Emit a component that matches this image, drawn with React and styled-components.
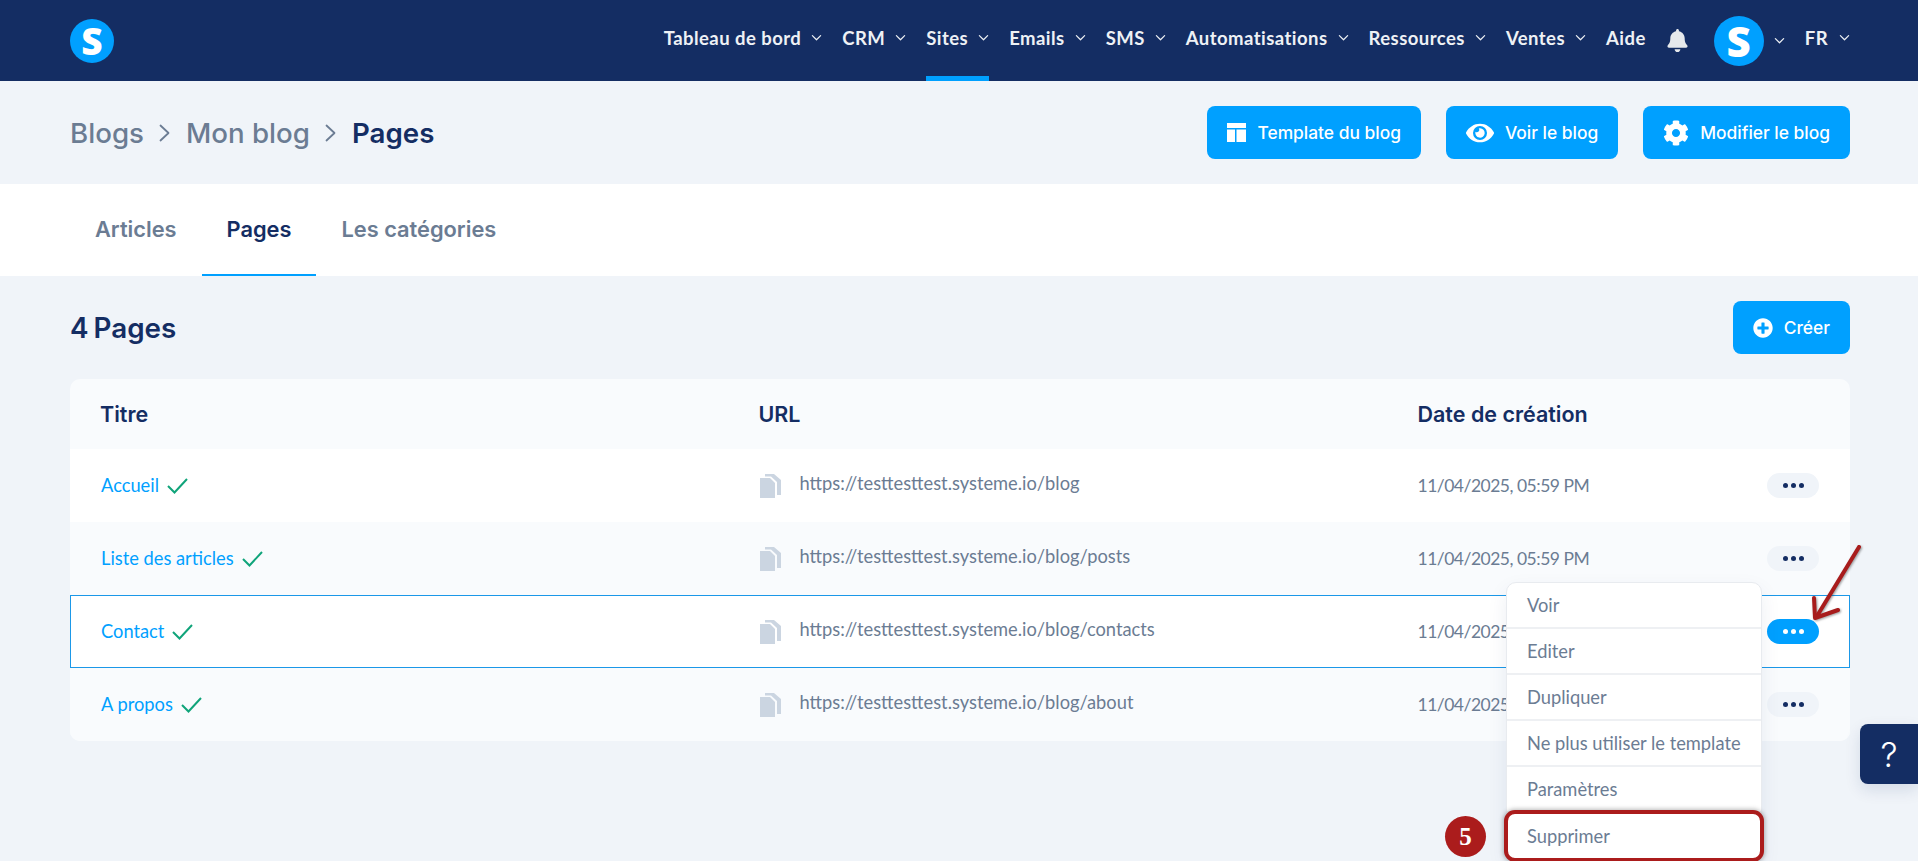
import React from 'react';
import styled, { createGlobalStyle } from 'styled-components';
import { FaBell, FaCog, FaEye, FaPlusCircle } from 'react-icons/fa';

const navItems = [
  { label: 'Tableau de bord', arrow: true },
  { label: 'CRM', arrow: true },
  { label: 'Sites', arrow: true, active: true },
  { label: 'Emails', arrow: true },
  { label: 'SMS', arrow: true },
  { label: 'Automatisations', arrow: true },
  { label: 'Ressources', arrow: true },
  { label: 'Ventes', arrow: true },
  { label: 'Aide' },
];

const pages = [
  { title: 'Accueil', url: 'https://testtesttest.systeme.io/blog' },
  { title: 'Liste des articles', url: 'https://testtesttest.systeme.io/blog/posts', alt: true },
  { title: 'Contact', url: 'https://testtesttest.systeme.io/blog/contacts', selected: true },
  { title: 'A propos', url: 'https://testtesttest.systeme.io/blog/about', alt: true },
];

const menuItems = ['Voir', 'Editer', 'Dupliquer', 'Ne plus utiliser le template', 'Paramètres'];

const Chevron = ({ size = 11 }) => (
  <svg width={size} height={size} viewBox="0 0 12 12" fill="none" stroke="currentColor" strokeWidth="1.3" strokeLinecap="round" strokeLinejoin="round">
    <path d="M1.5 4l4.5 4.5L10.5 4" />
  </svg>
);

const CrumbChevron = () => (
  <svg width="11" height="18" viewBox="0 0 11 18" fill="none" stroke="currentColor" strokeWidth="1.8" strokeLinecap="round" strokeLinejoin="round">
    <path d="M1.5 1.5L9.500 9l-8 7.500" />
  </svg>
);

const TemplateIcon = () => (
  <svg width="19" height="19" viewBox="0 0 19 19" fill="currentColor">
    <path d="M0 0h19v5H0z" />
    <path d="M0 6.500h8V19H0z" />
    <path d="M9.500 6.500H19V19H9.500z" />
  </svg>
);

const CopyIcon = () => (
  <svg width="21" height="24" viewBox="0 0 21 24" fill="#cbd5e1">
    <path d="M0 4h10l5 5v15H0z" />
    <path d="M5 0h9l7 6v15h-4V8l-6-5.500H5z" />
  </svg>
);

const CheckIcon = () => (
  <svg width="21" height="16" viewBox="0 0 21 16" fill="none" stroke="#10a47a" strokeWidth="2">
    <path d="M1 8l6.500 6.500L20 1" />
  </svg>
);

const App = () => (
  <Page>
    <GlobalStyle />
    <TopBar>
      <LogoCircle $size={44}>S</LogoCircle>
      <TopNav>
        {navItems.map((item) => (
          <NavItem key={item.label} $active={item.active}>
            {item.label}
            {item.arrow && <Chevron />}
          </NavItem>
        ))}
        <BellWrap><FaBell size={23} /></BellWrap>
        <AvatarWrap>
          <LogoCircle $size={50}>S</LogoCircle>
          <Chevron />
        </AvatarWrap>
        <LangItem>FR <Chevron /></LangItem>
      </TopNav>
    </TopBar>

    <SubHeader>
      <Breadcrumb>
        <Crumb>Blogs</Crumb>
        <CrumbSep><CrumbChevron /></CrumbSep>
        <Crumb>Mon blog</Crumb>
        <CrumbSep><CrumbChevron /></CrumbSep>
        <Crumb $current>Pages</Crumb>
      </Breadcrumb>
      <Actions>
        <PrimaryButton><TemplateIcon />Template du blog</PrimaryButton>
        <PrimaryButton><FaEye size={28} />Voir le blog</PrimaryButton>
        <PrimaryButton><FaCog size={26} />Modifier le blog</PrimaryButton>
      </Actions>
    </SubHeader>

    <Tabs>
      <Tab>Articles</Tab>
      <Tab $active>Pages</Tab>
      <Tab>Les catégories</Tab>
    </Tabs>

    <Content>
      <TitleRow>
        <PageCount>4 Pages</PageCount>
        <PrimaryButton><FaPlusCircle size={20} />Créer</PrimaryButton>
      </TitleRow>

      <Table>
        <HeadRow>
          <HeadCell>Titre</HeadCell>
          <HeadCell>URL</HeadCell>
          <HeadCell>Date de création</HeadCell>
        </HeadRow>
        {pages.map((page) => (
          <Row key={page.title} $alt={page.alt} $selected={page.selected}>
            <TitleCell><TitleText>{page.title}</TitleText><CheckIcon /></TitleCell>
            <UrlCell><CopyIcon /><UrlText>{page.url}</UrlText></UrlCell>
            <DateCell>11/04/2025, 05:59 PM</DateCell>
            <MoreCell>
              <MoreButton $active={page.selected}>
                <Dot /><Dot /><Dot />
              </MoreButton>
              {page.selected && (
                <Menu>
                  {menuItems.map((label) => <MenuItem key={label}>{label}</MenuItem>)}
                  <MenuItem $marked>
                    Supprimer
                    <StepBadge>5</StepBadge>
                  </MenuItem>
                </Menu>
              )}
            </MoreCell>
          </Row>
        ))}
      </Table>
    </Content>

    <HelpButton>?</HelpButton>

    <ArrowMark width="52" height="82" viewBox="0 0 52 82" fill="none" stroke="#a81c1c" strokeWidth="4" strokeLinecap="round" strokeLinejoin="round">
      <path d="M48 3L6 72" />
      <path d="M3 54L4 74L27 66" />
    </ArrowMark>
  </Page>
);

const GlobalStyle = createGlobalStyle`
  html, body {
    margin: 0;
    padding: 0;
    background: #f0f4f9;
  }
  * {
    box-sizing: border-box;
  }
`;

const Page = styled.div`
  position: relative;
  width: 1918px;
  height: 861px;
  overflow: hidden;
  background: #f0f4f9;
  font-family: Inter, "Liberation Sans", sans-serif;
`;

const TopBar = styled.header`
  display: flex;
  align-items: center;
  justify-content: space-between;
  height: 81px;
  padding: 0 68px 0 70px;
  background: #142d63;
`;

const LogoCircle = styled.div`
  display: flex;
  align-items: center;
  justify-content: center;
  width: ${({ $size }) => $size}px;
  height: ${({ $size }) => $size}px;
  border-radius: 50%;
  background: #00a0ff;
  color: #fff;
  font-family: "Open Sans", sans-serif;
  font-size: ${({ $size }) => Math.round($size * 0.84)}px;
  font-weight: 800;
  line-height: 1;
`;

const TopNav = styled.nav`
  display: flex;
  align-items: center;
  height: 100%;
  color: #eef1f5;
`;

const NavItem = styled.div`
  position: relative;
  display: flex;
  align-items: center;
  gap: 10px;
  height: 100%;
  margin-right: 20px;
  padding-bottom: 6px;
  font-family: Lato, sans-serif;
  font-size: 18.500px;
  font-weight: 700;
  letter-spacing: 0.45px;
  white-space: nowrap;

  ${({ $active }) => $active && `
    &::after {
      content: '';
      position: absolute;
      left: 0;
      right: 0;
      bottom: 0;
      height: 5px;
      background: #00a0ff;
    }
  `}
`;

const BellWrap = styled.div`
  display: flex;
  margin-right: 25px;
  color: #e6e9ec;
`;

const AvatarWrap = styled.div`
  display: flex;
  align-items: center;
  gap: 10px;
  margin-right: 20px;
`;

const LangItem = styled.div`
  display: flex;
  align-items: center;
  gap: 11px;
  margin-bottom: 6px;
  font-family: Lato, sans-serif;
  font-size: 18.500px;
  font-weight: 700;
  letter-spacing: 0.45px;
`;

const SubHeader = styled.div`
  display: flex;
  align-items: center;
  justify-content: space-between;
  height: 103px;
  padding: 0 68px 0 70px;
`;

const Breadcrumb = styled.div`
  display: flex;
  align-items: center;
  gap: 15.500px;
`;

const Crumb = styled.span`
  font-size: 27.700px;
  font-weight: ${({ $current }) => ($current ? 600 : 500)};
  color: ${({ $current }) => ($current ? '#142d63' : '#6b7c93')};
`;

const CrumbSep = styled.span`
  display: flex;
  color: #6b7c93;
`;

const Actions = styled.div`
  display: flex;
  gap: 25px;
`;

const PrimaryButton = styled.button`
  display: flex;
  align-items: center;
  gap: 11px;
  height: 53px;
  padding: 0 20px;
  border: 0;
  border-radius: 8px;
  background: #00a0ff;
  color: #fff;
  font-family: Inter, sans-serif;
  font-size: 17.400px;
  font-weight: 500;
`;

const Tabs = styled.div`
  display: flex;
  height: 92px;
  padding-left: 70px;
  background: #fff;
`;

const Tab = styled.div`
  display: flex;
  align-items: center;
  padding: 0 25px;
  border-bottom: 2px solid ${({ $active }) => ($active ? '#00a0ff' : 'transparent')};
  color: ${({ $active }) => ($active ? '#142d63' : '#6b7c93')};
  font-size: 21.800px;
  font-weight: 600;
`;

const Content = styled.main`
  padding: 25px 68px 0 70px;
`;

const TitleRow = styled.div`
  display: flex;
  align-items: center;
  justify-content: space-between;
  margin-bottom: 25px;
`;

const PageCount = styled.h1`
  margin: 0;
  color: #142d63;
  font-size: 27.800px;
  font-weight: 600;
  word-spacing: -2px;
`;

const Table = styled.div`
  border-radius: 10px;
  background: #f9fbfd;
`;

const columns = `
  display: grid;
  grid-template-columns: 658.5px 659px 1fr auto;
  align-items: center;
  padding: 0 30px;
`;

const HeadRow = styled.div`
  ${columns}
  height: 70px;
`;

const HeadCell = styled.div`
  color: #142d63;
  font-size: 21.500px;
  font-weight: 600;
`;

const Row = styled.div`
  ${columns}
  position: relative;
  height: 73px;
  background: ${({ $alt }) => ($alt ? '#f9fbfd' : '#fff')};
  ${({ $selected }) => $selected && 'z-index: 2; box-shadow: inset 0 0 0 1px #1b98e8;'}

  &:last-child {
    border-radius: 0 0 10px 10px;
  }
`;

const TitleCell = styled.div`
  display: flex;
  align-items: center;
  gap: 8px;
  padding-left: 1px;
  color: #00a0ff;
  font-family: Lato, sans-serif;
  font-size: 18.300px;
`;

const TitleText = styled.span`
  margin-bottom: 2px;
`;

const UrlCell = styled.div`
  display: flex;
  align-items: center;
  gap: 19px;
  padding-left: 1px;
  color: #6b7c93;
  font-family: Lato, sans-serif;
  font-size: 18.300px;
`;

const UrlText = styled.span`
  margin-bottom: 6px;
`;

const DateCell = styled.div`
  color: #6b7c93;
  font-family: Lato, sans-serif;
  font-size: 17.500px;
  letter-spacing: -0.5px;
`;

const MoreCell = styled.div`
  position: relative;
  margin-right: 1px;
`;

const MoreButton = styled.div`
  display: flex;
  align-items: center;
  justify-content: center;
  gap: 3px;
  width: 52px;
  height: 25px;
  border-radius: 12.500px;
  background: ${({ $active }) => ($active ? '#00a0ff' : '#f0f4f9')};
  color: ${({ $active }) => ($active ? '#fff' : '#142d63')};
`;

const Dot = styled.span`
  width: 5px;
  height: 5px;
  border-radius: 50%;
  background: currentColor;
`;

const Menu = styled.div`
  position: absolute;
  top: -37px;
  right: 57px;
  width: 256px;
  border: 1px solid #e8ebef;
  border-radius: 10px;
  background: #fff;
  box-shadow: 0 8px 20px rgba(20, 45, 99, 0.08);
`;

const MenuItem = styled.div`
  position: relative;
  display: flex;
  align-items: center;
  height: 46px;
  padding-left: 20px;
  color: #6b7c93;
  font-family: Lato, sans-serif;
  font-size: 18.300px;
  white-space: nowrap;
  border-bottom: 2px solid #eef0f3;

  ${({ $marked }) => $marked && `
    border-bottom: 0;
    border-radius: 8px;
    outline: 4px solid #ab1c1c;
    outline-offset: -1px;
    box-shadow: 0 0 4px 4px rgba(60, 60, 60, 0.35);
  `}
`;

const StepBadge = styled.span`
  position: absolute;
  left: -62px;
  top: 3px;
  display: flex;
  align-items: center;
  justify-content: center;
  width: 41px;
  height: 41px;
  border-radius: 50%;
  background: #ab1c1c;
  color: #fff;
  font-family: "Liberation Serif", serif;
  font-size: 25px;
  font-weight: 700;
`;

const HelpButton = styled.div`
  position: absolute;
  top: 724px;
  right: 0;
  display: flex;
  align-items: center;
  justify-content: center;
  width: 58px;
  height: 60px;
  border-radius: 8px 0 0 8px;
  background: #142d63;
  color: #fff;
  font-family: Inter, sans-serif;
  font-size: 34px;
  font-weight: 300;
  box-shadow: 0 6px 16px rgba(20, 45, 99, 0.12);
`;

const ArrowMark = styled.svg`
  position: absolute;
  z-index: 3;
  top: 544px;
  left: 1811px;
  filter: drop-shadow(1px 1px 1px rgba(60, 60, 60, 0.5));
`;

export default App;
